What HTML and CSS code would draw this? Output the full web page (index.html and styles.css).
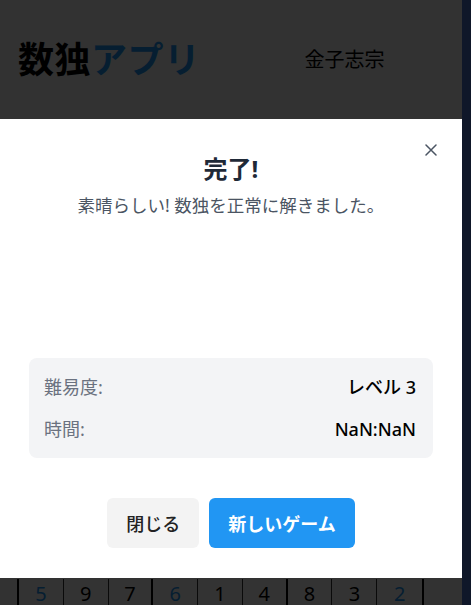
FILE: index.html
```html
<!DOCTYPE html>
<html lang="ja">
<head>
<meta charset="utf-8">
<title>数独アプリ</title>
<link rel="stylesheet" href="styles.css">
</head>
<body>
<div class="app">
  <header class="header">
    <h1 class="logo">数独<span class="logo-accent">アプリ</span></h1>
    <span class="user">金子志宗</span>
  </header>
  <main class="main">
    <div class="controls"></div>
    <div class="board">
      <div class="row">
        <div class="cell given">5</div><div class="cell">9</div><div class="cell box-end">7</div>
        <div class="cell given">6</div><div class="cell">1</div><div class="cell box-end">4</div>
        <div class="cell">8</div><div class="cell">3</div><div class="cell given">2</div>
      </div>
    </div>
  </main>
  <div class="overlay">
    <div class="modal" role="dialog">
      <button class="close" aria-label="閉じる">
        <svg width="12" height="12" viewBox="0 0 12 12"><path d="M1 1L11 11M11 1L1 11" stroke="#4b5563" stroke-width="1.5" stroke-linecap="round" fill="none"/></svg>
      </button>
      <h2 class="modal-title">完了!</h2>
      <p class="modal-sub">素晴らしい! 数独を正常に解きました。</p>
      <div class="spacer"></div>
      <div class="stats">
        <div class="stat"><span class="stat-label">難易度:</span><span class="stat-value">レベル 3</span></div>
        <div class="stat"><span class="stat-label">時間:</span><span class="stat-value">NaN:NaN</span></div>
      </div>
      <div class="actions">
        <button class="btn btn-secondary">閉じる</button>
        <button class="btn btn-primary">新しいゲーム</button>
      </div>
    </div>
  </div>
</div>
<div class="scrollbar"></div>
</body>
</html>
```

FILE: styles.css
```css
* { box-sizing: border-box; }
html, body { margin: 0; height: 100%; }
body {
  display: flex;
  overflow: hidden;
  font-family: "Noto Sans", "Noto Sans CJK JP", sans-serif;
  color: #111;
  background: #fff;
}
.app {
  flex: 1;
  position: relative;
  overflow: hidden;
  background: #f7f7f7;
}
.scrollbar {
  width: 9px;
  flex: none;
  background: #0f1729;
}
.header {
  height: 119px;
  display: flex;
  align-items: center;
  gap: 104px;
  padding: 0 18px 4px;
}
.logo {
  margin: 0;
  font-size: 36px;
  font-weight: 700;
  color: #000;
  letter-spacing: 0.5px;
}
.logo-accent { color: #2196f3; }
.user {
  font-size: 20px;
  color: #000;
  padding-top: 2px;
}
.main { padding: 0 17px; }
.controls { height: 460px; }
.board {
  width: 407px;
  border-left: 2px solid #000;
  border-right: 2px solid #000;
}
.row { display: flex; height: 45px; }
.cell {
  width: 45px;
  display: flex;
  align-items: flex-start;
  justify-content: center;
  font-size: 20px;
  line-height: 24px;
  padding-top: 3px;
  color: #000;
  background: #fff;
  border-right: 1px solid #333;
}
.cell:last-child { border-right: none; }
.cell.box-end { border-right: 2px solid #000; }
.cell.given { color: #2196f3; }
.overlay {
  position: absolute;
  inset: 0;
  background: rgba(0, 0, 0, 0.8);
  display: flex;
  flex-direction: column;
  padding-top: 119px;
}
.modal {
  position: relative;
  background: #fff;
  height: 459px;
  display: flex;
  flex-direction: column;
  align-items: center;
  padding: 33px 29px 30px;
}
.close {
  position: absolute;
  top: 19px;
  right: 19px;
  width: 24px;
  height: 24px;
  border: none;
  background: none;
  padding: 6px;
  display: flex;
}
.modal-title {
  margin: 0;
  font-size: 24px;
  font-weight: 700;
  color: #1f2937;
  line-height: 34px;
}
.modal-sub {
  margin: 5px 0 0;
  font-size: 17.5px;
  color: #4b5563;
  line-height: 28px;
}
.spacer { flex: 1; }
.stats {
  align-self: stretch;
  background: #f3f4f6;
  border-radius: 8px;
  padding: 15px 17px 15px 15px;
  display: flex;
  flex-direction: column;
  gap: 14px;
}
.stat {
  display: flex;
  justify-content: space-between;
  font-size: 18px;
  line-height: 28px;
}
.stat-label { color: #6b7280; }
.stat-value { color: #000; font-weight: 500; }
.actions {
  display: flex;
  gap: 10px;
  margin-top: 40px;
}
.btn {
  height: 50px;
  border: none;
  border-radius: 6px;
  padding: 0 19px;
  font-family: inherit;
  font-size: 18px;
  font-weight: 500;
}
.btn-secondary { background: #f3f3f3; color: #222; }
.btn-primary { background: #2196f3; color: #fff; font-weight: 700; }
```
